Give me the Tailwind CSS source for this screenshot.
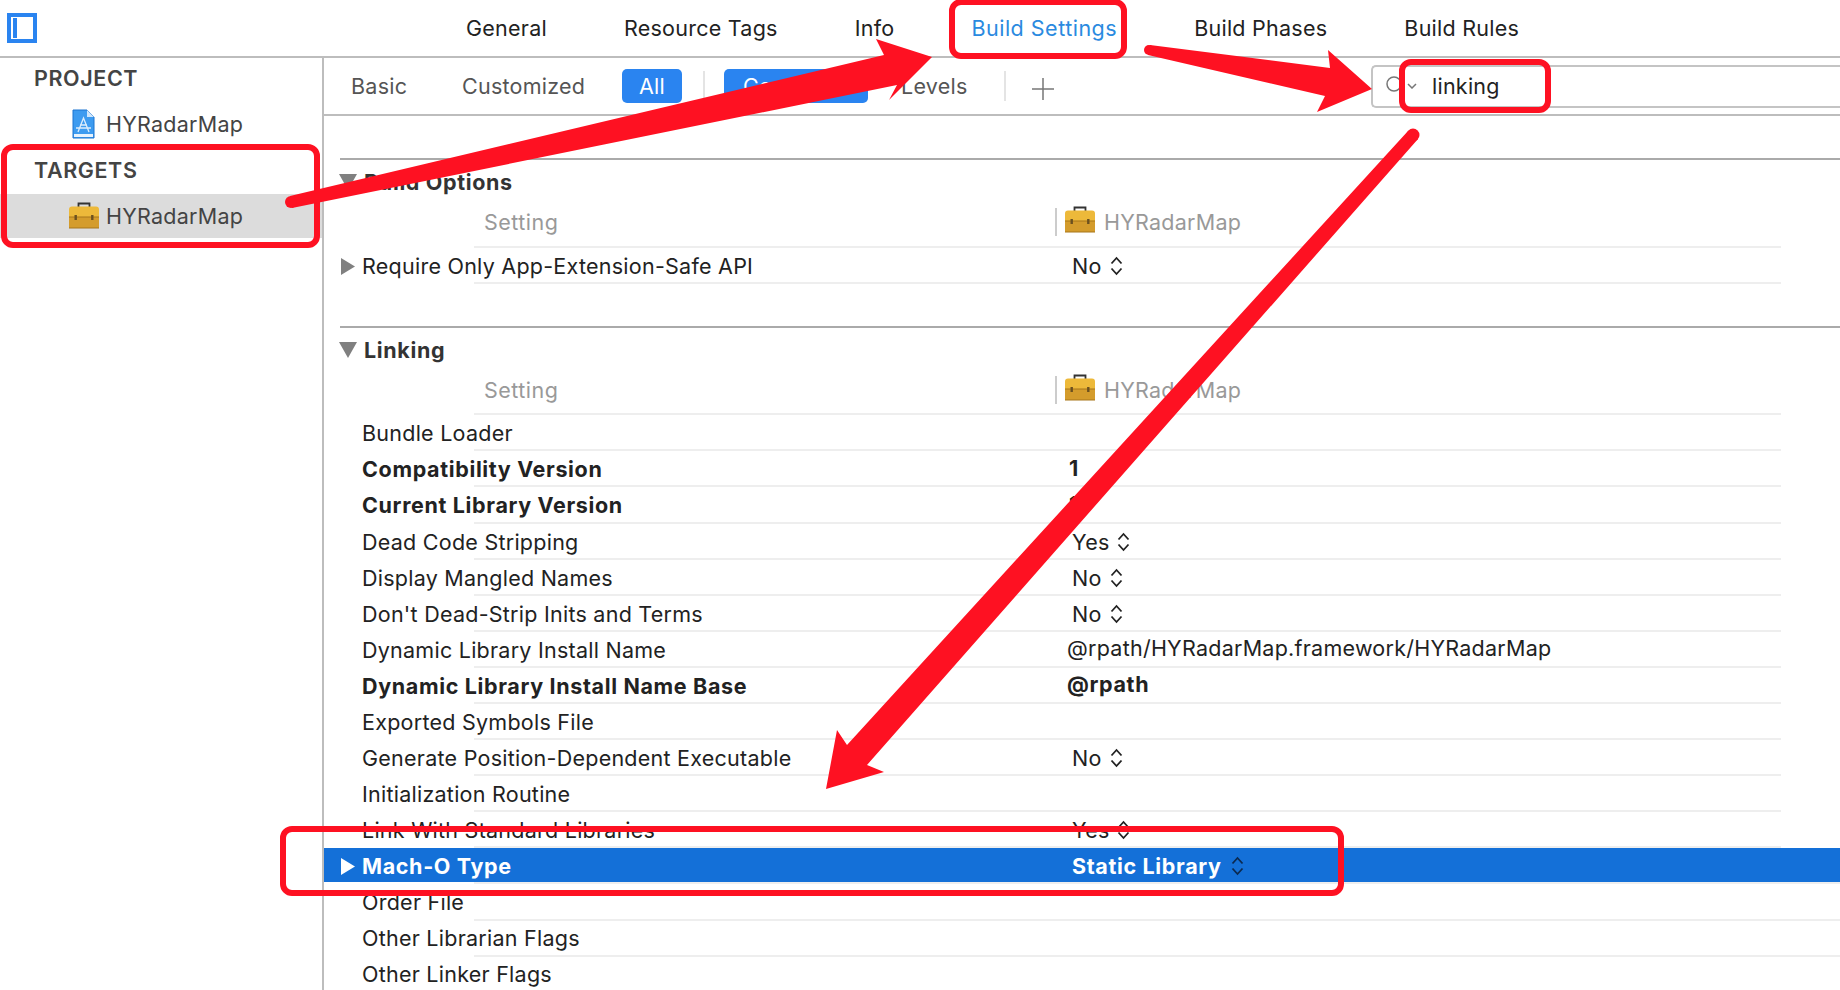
<!DOCTYPE html>
<html lang="en">
<head>
  <meta charset="UTF-8">
  <title>Build Settings</title>
  <script src="https://cdn.jsdelivr.net/npm/@tailwindcss/browser@4"></script>
</head>
<body class="relative h-[990px] overflow-hidden bg-white [font-family:Inter,sans-serif] text-[21.500px] tracking-[0.25px] text-[#222]">
  <svg width="0" height="0" class="absolute">
    <defs>
      <symbol id="toolbox" viewBox="0 0 32 27">
        <path d="M10.500 6V1.500h11V6" fill="none" stroke="#333" stroke-width="1.800"/>
        <path d="M1 7.500q0-3 3-3h24q3 0 3 3V15H1z" fill="#edb93a"/>
        <path d="M1 15h30v11H1z" fill="#d49c2c"/>
        <path d="M1 15h30M1 26h30" stroke="#a8761a" stroke-width="1.200"/>
        <rect x="6.500" y="13" width="2.400" height="5" fill="#6b5020"/>
        <rect x="23.100" y="13" width="2.400" height="5" fill="#6b5020"/>
      </symbol>
      <symbol id="stepper" viewBox="0 0 13 20">
        <path d="M1.500 7.500 6.500 2l5 5.500M1.500 12.500l5 5.500 5-5.500" fill="none" stroke="currentColor" stroke-width="1.800"/>
      </symbol>
      <symbol id="tri-right" viewBox="0 0 14 17"><path d="M0 0l14 8.500L0 17z" fill="currentColor"/></symbol>
      <symbol id="tri-down" viewBox="0 0 18 16"><path d="M0 0h18L9 16z" fill="currentColor"/></symbol>
    </defs>
  </svg>

  <!-- top tabs -->
  <header class="flex h-[58px] items-center border-b-2 border-[#bdbdbd]">
    <div class="ml-[7px] flex h-[30px] w-[30px] shrink-0 items-center border-[4px] border-[#2a84f0] bg-white pl-[2px]"><span class="h-[20px] w-[4px] bg-[#2a84f0]"></span></div>
    <nav class="ml-[429px] flex items-center gap-[77px]">
      <span>General</span>
      <span>Resource Tags</span>
      <span>Info</span>
      <span class="tracking-[0.5px] text-[#2a8ae0]">Build Settings</span>
      <span>Build Phases</span>
      <span>Build Rules</span>
    </nav>
  </header>

  <div class="flex">
    <!-- left list -->
    <aside class="h-[932px] w-[324px] shrink-0 border-r-2 border-[#bdbdbd] text-[#444]">
      <div class="flex h-[40px] items-center pl-[34px] font-semibold tracking-[0.6px]">PROJECT</div>
      <div class="flex h-[52px] items-center pl-[72px]">
        <svg width="23" height="30" viewBox="0 0 23 30" class="shrink-0">
          <path d="M1 1h14l7 7v21H1z" fill="#3d9bf0" stroke="#1d74d0"/>
          <path d="M15 1v7h7z" fill="#cfe6fb"/>
          <path d="M2 25h19v3H2z" fill="#e8f3fd"/>
          <path d="M6 23 11.500 9 17 23M4 19h15M8 16h7" fill="none" stroke="#dcedfc" stroke-width="1.300"/>
        </svg>
        <span class="ml-[11px]">HYRadarMap</span>
      </div>
      <div class="flex h-[44px] items-center pb-[4px] pl-[34px] font-semibold tracking-[0.6px]">TARGETS</div>
      <div class="flex h-[44px] items-center bg-[#dcdcdc] pl-[68px]">
        <svg width="32" height="27" class="-mt-[2px] shrink-0"><use href="#toolbox"/></svg>
        <span class="ml-[6px]">HYRadarMap</span>
      </div>
    </aside>

    <main class="min-w-0 flex-1">
      <!-- filter bar -->
      <div class="flex h-[58px] items-center border-b-2 border-[#bdbdbd] pl-[27px] text-[#555]">
        <span class="w-[55px]">Basic</span>
        <span class="ml-[56px] w-[123px]">Customized</span>
        <span class="ml-[37px] flex h-[34px] w-[60px] items-center justify-center rounded-[5px] bg-[#2a84f0] text-white">All</span>
        <span class="ml-[21px] h-[30px] w-[2px] bg-[#e4e4e4]"></span>
        <span class="ml-[19px] flex h-[34px] w-[144px] items-center justify-center rounded-[5px] bg-[#2a84f0] text-white">Combined</span>
        <span class="ml-[33px] w-[65px]">Levels</span>
        <span class="ml-[38px] h-[30px] w-[2px] bg-[#e4e4e4]"></span>
        <svg width="22" height="22" viewBox="0 0 22 22" class="ml-[26px] mt-[6px] shrink-0"><path d="M11 0v22M0 11h22" stroke="#777" stroke-width="1.500"/></svg>
        <div class="ml-auto flex h-[43px] w-[469px] items-center rounded-l-[5px] border-y-2 border-l-2 border-[#c4c4c4] pl-[13px] text-[#222]">
          <svg width="20" height="20" viewBox="0 0 20 20" class="shrink-0"><circle cx="8" cy="8" r="7" fill="none" stroke="#777" stroke-width="1.500"/><path d="M13 13l5 5" stroke="#777" stroke-width="1.500"/></svg>
          <svg width="10" height="6" viewBox="0 0 10 6" class="ml-[1px] shrink-0"><path d="M1 1l4 4 4-4" fill="none" stroke="#777" stroke-width="1.500"/></svg>
          <span class="ml-[15px]">linking</span>
        </div>
      </div>

      <div class="mt-[42px] ml-[16px] h-[2px] bg-[#aaa]"></div>
      <!-- Build Options -->
      <div class="flex h-[44px] items-center pl-[15px]">
        <svg width="18" height="16" class="shrink-0 text-[#808080]"><use href="#tri-down"/></svg>
        <span class="ml-[7px] font-bold tracking-[0.65px] text-[#333]">Build Options</span>
      </div>
      <div class="flex h-[42px] items-center pb-[6px] text-[#999]">
        <span class="ml-[160px] w-[571px] tracking-[0.5px]">Setting</span>
        <span class="h-[28px] w-[2px] bg-[#ccc]"></span>
        <svg width="32" height="27" class="-mt-[5px] ml-[7px] shrink-0"><use href="#toolbox"/></svg>
        <span class="ml-[8px]">HYRadarMap</span>
      </div>
      <div class="ml-[150px] mr-[59px] h-[2px] bg-[#eee]"></div>
      <div class="flex h-[34px] items-center pl-[17px] pt-[2px]">
        <svg width="14" height="17" class="shrink-0 text-[#808080]"><use href="#tri-right"/></svg>
        <span class="ml-[7px] w-[710px]">Require Only App-Extension-Safe API</span>
        <span>No</span>
        <svg width="13" height="20" class="ml-[8px] shrink-0"><use href="#stepper"/></svg>
      </div>
      <div class="ml-[150px] mr-[59px] h-[2px] bg-[#eee]"></div>

      <div class="mt-[42px] ml-[16px] h-[2px] bg-[#aaa]"></div>
      <!-- Linking -->
      <div class="flex h-[44px] items-center pl-[15px]">
        <svg width="18" height="16" class="shrink-0 text-[#808080]"><use href="#tri-down"/></svg>
        <span class="ml-[7px] font-bold tracking-[0.65px] text-[#333]">Linking</span>
      </div>
      <div class="flex h-[41.300px] items-center pb-[6px] text-[#999]">
        <span class="ml-[160px] w-[571px] tracking-[0.5px]">Setting</span>
        <span class="h-[28px] w-[2px] bg-[#ccc]"></span>
        <svg width="32" height="27" class="-mt-[4px] ml-[7px] shrink-0"><use href="#toolbox"/></svg>
        <span class="ml-[8px]">HYRadarMap</span>
      </div>
      <div class="ml-[150px] mr-[59px] h-[2px] bg-[#eee]"></div>

      <div class="flex h-[34.100px] items-center pl-[38px] pt-[2px]">Bundle Loader</div>
      <div class="ml-[150px] mr-[59px] h-[2px] bg-[#eee]"></div>
      <div class="flex h-[34.100px] items-center pl-[38px] pt-[2px] font-bold tracking-[0.65px]"><span class="w-[707px]">Compatibility Version</span><span class="-mt-[3px]">1</span></div>
      <div class="ml-[150px] mr-[59px] h-[2px] bg-[#eee]"></div>
      <div class="flex h-[34.100px] items-center pl-[38px] pt-[2px] font-bold tracking-[0.65px]"><span class="w-[707px]">Current Library Version</span><span class="-mt-[3px]">1</span></div>
      <div class="ml-[150px] mr-[59px] h-[2px] bg-[#eee]"></div>
      <div class="flex h-[34.100px] items-center pl-[38px] pt-[2px]"><span class="w-[710px]">Dead Code Stripping</span><span>Yes</span><svg width="13" height="20" class="ml-[7px] shrink-0"><use href="#stepper"/></svg></div>
      <div class="ml-[150px] mr-[59px] h-[2px] bg-[#eee]"></div>
      <div class="flex h-[34.100px] items-center pl-[38px] pt-[2px]"><span class="w-[710px]">Display Mangled Names</span><span>No</span><svg width="13" height="20" class="ml-[8px] shrink-0"><use href="#stepper"/></svg></div>
      <div class="ml-[150px] mr-[59px] h-[2px] bg-[#eee]"></div>
      <div class="flex h-[34.100px] items-center pl-[38px] pt-[2px]"><span class="w-[710px]">Don't Dead-Strip Inits and Terms</span><span>No</span><svg width="13" height="20" class="ml-[8px] shrink-0"><use href="#stepper"/></svg></div>
      <div class="ml-[150px] mr-[59px] h-[2px] bg-[#eee]"></div>
      <div class="flex h-[34.100px] items-center pl-[38px] pt-[2px]"><span class="w-[705px]">Dynamic Library Install Name</span><span class="-mt-[3px]">@rpath/HYRadarMap.framework/HYRadarMap</span></div>
      <div class="ml-[150px] mr-[59px] h-[2px] bg-[#eee]"></div>
      <div class="flex h-[34.100px] items-center pl-[38px] pt-[2px] font-bold tracking-[0.65px]"><span class="w-[705px]">Dynamic Library Install Name Base</span><span class="-mt-[3px]">@rpath</span></div>
      <div class="ml-[150px] mr-[59px] h-[2px] bg-[#eee]"></div>
      <div class="flex h-[34.100px] items-center pl-[38px] pt-[2px]">Exported Symbols File</div>
      <div class="ml-[150px] mr-[59px] h-[2px] bg-[#eee]"></div>
      <div class="flex h-[34.100px] items-center pl-[38px] pt-[2px]"><span class="w-[710px]">Generate Position-Dependent Executable</span><span>No</span><svg width="13" height="20" class="ml-[8px] shrink-0"><use href="#stepper"/></svg></div>
      <div class="ml-[150px] mr-[59px] h-[2px] bg-[#eee]"></div>
      <div class="flex h-[34.100px] items-center pl-[38px] pt-[2px]">Initialization Routine</div>
      <div class="ml-[150px] mr-[59px] h-[2px] bg-[#eee]"></div>
      <div class="flex h-[34.100px] items-center pl-[38px] pt-[2px]"><span class="w-[710px]">Link With Standard Libraries</span><span>Yes</span><svg width="13" height="20" class="ml-[7px] shrink-0"><use href="#stepper"/></svg></div>
      <div class="ml-[150px] mr-[59px] h-[2px] bg-[#eee]"></div>
      <div class="flex h-[34px] items-center bg-[#1470d8] pl-[17px] pt-[2px] font-bold tracking-[0.65px] text-white">
        <svg width="14" height="17" class="shrink-0"><use href="#tri-right"/></svg>
        <span class="ml-[7px] w-[710px]">Mach-O Type</span>
        <span>Static Library</span>
        <svg width="13" height="20" class="ml-[9px] shrink-0 text-[#0c2a50]"><use href="#stepper"/></svg>
      </div>
      <div class="ml-[150px] h-[2px] bg-[#eee]"></div>
      <div class="flex h-[34.100px] items-center pl-[38px] pt-[2px]">Order File</div>
      <div class="ml-[150px] h-[2px] bg-[#eee]"></div>
      <div class="flex h-[34.100px] items-center pl-[38px] pt-[2px]">Other Librarian Flags</div>
      <div class="ml-[150px] h-[2px] bg-[#eee]"></div>
      <div class="flex h-[34.100px] items-center pl-[38px]">Other Linker Flags</div>
    </main>
  </div>

  <!-- red annotations drawn over the screenshot -->
  <svg class="pointer-events-none absolute inset-0" width="1840" height="990" viewBox="0 0 1840 990">
    <g fill="none" stroke="#fe1122" stroke-width="6">
      <rect x="4" y="147" width="313" height="98" rx="9"/>
      <rect x="952" y="2" width="172" height="54" rx="9"/>
      <rect x="1402" y="62" width="146" height="48" rx="9"/>
      <rect x="283" y="829" width="1058" height="64" rx="9"/>
    </g>
    <g fill="#fe1122">
      <polygon points="290,196 884,55 876,39 932,57 889,100 897,85 292,208"/>
      <circle cx="291" cy="202" r="6"/>
      <polygon points="1150,45 1330,68 1328,50 1372,89 1317,112 1325,96 1148,55"/>
      <circle cx="1149" cy="50" r="5"/>
      <polygon points="1408,131 847,745 837,730 826,789 884,772 867,765 1418,139"/>
      <circle cx="1413" cy="135" r="6.500"/>
    </g>
  </svg>
</body>
</html>
